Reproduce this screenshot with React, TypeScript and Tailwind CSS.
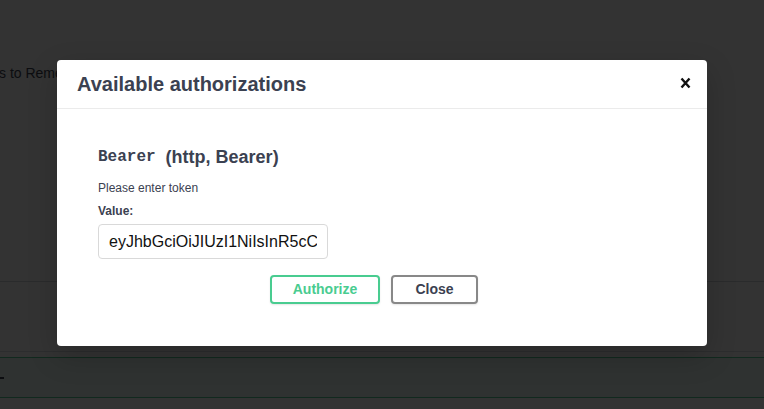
import React from "react";

export default function App() {
  const sans = { fontFamily: '"Liberation Sans", Arial, sans-serif' };
  return (
    <div className="relative w-full h-[409px] overflow-hidden bg-[#333333]" style={sans}>
      {/* background page (dimmed) */}
      <div className="flex flex-col">
        <div className="h-[65px]" />
        <div className="h-[16px] w-[57px] overflow-hidden flex items-center text-[14px] text-[#0c0d10] whitespace-nowrap">
          <span className="-ml-[1px]">s to Remediation</span>
        </div>
        <div className="h-[201px] border-b border-[#2a2b2c]" />
        <div className="h-[70px] border-b border-[#2c2d2e]" />
        <div className="h-[5px]" />
        <div className="h-[41px] border-y border-[#11291e] bg-[#2f3231] flex items-center">
          <span className="block w-[4px] h-[2px] bg-[#0c0d10] ml-0 mt-[1px]" />
        </div>
      </div>

      {/* modal */}
      <div className="absolute left-[57px] top-[60px] w-[650px] bg-white rounded-[4px] shadow-[0_10px_30px_0_rgba(0,0,0,0.2)]">
        <div className="h-[49px] flex items-center justify-between pl-[20px] pr-[16px] border-b border-[#ebebeb]">
          <h3 className="text-[20px] font-bold text-[#3b4151] leading-none">Available authorizations</h3>
          <svg width="11" height="12" viewBox="0 0 11 12" className="mt-[-2px]">
            <path d="M1.5 1.5 L9.5 10.5 M9.5 1.5 L1.5 10.5" stroke="#111" strokeWidth="2.4" strokeLinecap="butt" />
          </svg>
        </div>
        <div className="pt-[38px] pb-[42px] px-[41px] flex flex-col">
          <h4 className="h-[20px] flex items-center text-[18px] font-bold text-[#3b4151] whitespace-nowrap">
            <code className="font-bold text-[16px] mr-[10px]" style={{ fontFamily: '"Liberation Mono", "Courier New", monospace' }}>Bearer</code>
            <span>(http, Bearer)</span>
          </h4>
          <p className="mt-[14px] h-[14px] flex items-center text-[12px] text-[#3b4151]">Please enter token</p>
          <label className="mt-[9px] h-[14px] flex items-center text-[12px] font-bold text-[#3b4151]">Value:</label>
          <input
            readOnly
            value="eyJhbGciOiJIUzI1NiIsInR5cCI6IkpXVCJ9.eyJzdWIiOiIxMjM0NTY3ODkwIn0"
            className="mt-[6px] w-[230px] h-[35px] border border-[#d9d9d9] rounded-[4px] px-[10px] text-[16px] text-[#111] outline-none"
            style={sans}
          />
          <div className="mt-[16px] flex justify-center pr-[16px] gap-[11px]">
            <button className="w-[110px] h-[29px] border-2 border-[#49cc90] rounded-[4px] text-[14px] font-bold text-[#49cc90] bg-white shadow-[0_1px_2px_rgba(0,0,0,0.1)]">
              Authorize
            </button>
            <button className="w-[87px] h-[29px] border-2 border-[#888888] rounded-[4px] text-[14px] font-bold text-[#3b4151] bg-white shadow-[0_1px_2px_rgba(0,0,0,0.1)]">
              Close
            </button>
          </div>
        </div>
      </div>
    </div>
  );
}
